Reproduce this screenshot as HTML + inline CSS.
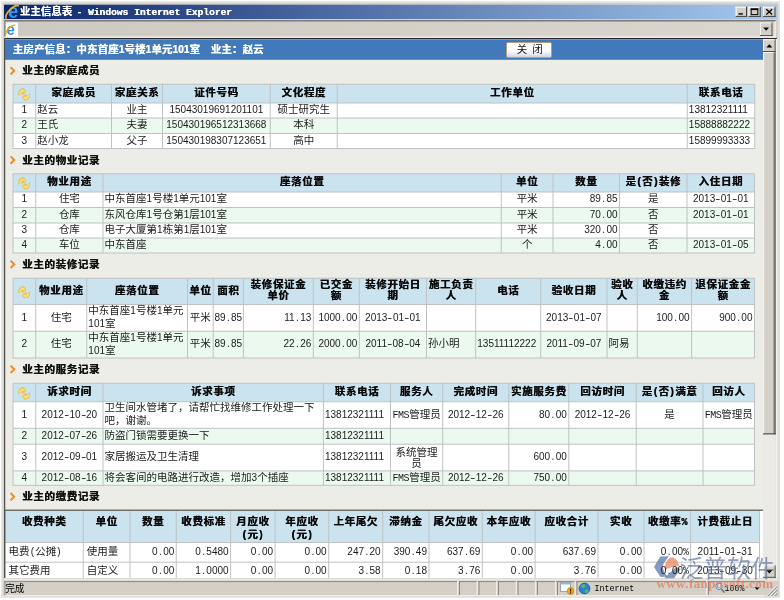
<!DOCTYPE html>
<html lang="zh-CN">
<head>
<meta charset="utf-8">
<title>业主信息表 - Windows Internet Explorer</title>
<style>
html,body{margin:0;padding:0;background:#fff;}
body{width:784px;height:600px;overflow:hidden;position:relative;font-family:"Liberation Sans","Noto Sans CJK SC",sans-serif;font-size:10.5px;color:#000;}
#bg{position:absolute;left:0;top:0;filter:blur(.45px);}
#tx{position:absolute;left:0;top:0;width:784px;height:600px;will-change:transform;filter:blur(.5px);}
i{font-style:normal;font-family:"Liberation Sans","Noto Sans CJK SC",sans-serif;font-size:10.0px;}
i u{display:inline-block;width:.556em;text-align:center;text-decoration:none;}
i u.d{transform:scaleX(1.5);}
i em{line-height:0;font-style:normal;font-family:"Liberation Mono",monospace;font-size:1em;letter-spacing:-.045em;}
.c{position:absolute;display:flex;align-items:center;justify-content:center;text-align:center;line-height:13px;overflow:visible;white-space:nowrap;color:#1a1a1a;}
.c.l{justify-content:flex-start;text-align:left;}
.c.r{justify-content:flex-end;text-align:right;}
.c.t{align-items:flex-start;padding-top:5.6px;box-sizing:border-box;}
.c.b{font-weight:bold;color:#0a0a0a;text-shadow:.4px 0 0 #111;line-height:11.5px;margin-top:-.3px;font-size:10.5px;letter-spacing:.65px;}
.c span{display:block;}
.c.w{white-space:normal;word-break:break-all;}
.c.n{line-height:11px;padding-top:1.4px;}
.c.b.t{line-height:12.4px;}
.ic{position:absolute;width:12px;height:12px;}
.ic svg{display:block;}
.st{text-shadow:.4px 0 0 #111;position:absolute;font-size:10.6px;letter-spacing:.55px;font-weight:bold;line-height:15px;white-space:nowrap;color:#111;}
.hb{text-shadow:.3px 0 0 #fff;position:absolute;font-size:10.5px;letter-spacing:.1px;font-weight:bold;color:#fff;line-height:15px;white-space:nowrap;}
.tt{text-shadow:.3px 0 0 #fff;position:absolute;left:19.8px;top:4.3px;color:#fff;font-weight:bold;line-height:15px;white-space:nowrap;font-size:10.5px;}
.tt .tm{font-family:"Liberation Mono",monospace;font-size:9.6px;font-weight:bold;letter-spacing:0;margin-left:1.3px;}
.sb{position:absolute;white-space:nowrap;line-height:14px;color:#000;font-size:10px;}
.sb b{font-weight:normal;font-family:"Liberation Mono",monospace;font-size:8.3px;}
.btn{position:absolute;left:506px;top:42px;width:46.4px;height:15.6px;word-spacing:2px;padding-left:1px;box-sizing:border-box;border:1px solid #b59d7e;border-radius:1.5px;background:linear-gradient(#ffffff 0%,#ffffff 55%,#d3d6de 100%);text-align:center;line-height:13px;font-size:10.5px;color:#111;}
.wm1{position:absolute;left:679.5px;top:555.2px;font-family:"Liberation Sans","Noto Sans CJK SC",sans-serif;font-size:23.8px;line-height:28px;color:rgba(84,104,146,.64);white-space:nowrap;letter-spacing:0;}
.wm2{position:absolute;left:656.5px;top:576.6px;font-family:"Liberation Serif",serif;font-weight:bold;font-size:13px;line-height:13px;color:rgba(222,126,94,.76);white-space:nowrap;letter-spacing:.42px;}
</style>
</head>
<body>
<svg id="bg" width="784" height="600" viewBox="0 0 784 600">
<defs>
<linearGradient id="tg" x1="0" x2="1" y1="0" y2="0"><stop offset="0" stop-color="#0a246a"/><stop offset="1" stop-color="#a6caf0"/></linearGradient>
<linearGradient id="tbg" x1="0" x2="1" y1="0" y2="0"><stop offset="0" stop-color="#cdcac3"/><stop offset=".5" stop-color="#d4d0c8"/><stop offset="1" stop-color="#d9d6cf"/></linearGradient>
</defs>
<!-- window frame -->
<rect x="1" y="1" width="779" height="596.8" fill="#d8d5ce"/>
<rect x="1.8" y="1.8" width="777" height="595" fill="none" stroke="#f4f3f0" stroke-width="1"/>
<rect x="3" y="3" width="775.5" height="593" fill="#d4d0c8"/>
<!-- title bar -->
<rect x="4" y="4.7" width="773.6" height="14.3" fill="url(#tg)"/>
<!-- toolbar -->
<rect x="4.3" y="20.8" width="771.4" height="17.4" fill="url(#tbg)"/>
<rect x="4.3" y="20.1" width="771.4" height="1.4" fill="#757471"/>
<rect x="774.6" y="21.5" width="1.2" height="15.5" fill="#f4f3f0"/>
<rect x="4.3" y="20.6" width="1" height="17" fill="#77756f"/>
<rect x="4.3" y="36.6" width="771.4" height="1.4" fill="#ffffff"/>
<rect x="4.3" y="37.9" width="772.5" height="1.5" fill="#26282e"/>
<rect x="5.00" y="39.40" width="758.00" height="538.60" fill="#edede8"/>
<rect x="5.00" y="39.40" width="758.00" height="20.40" fill="#4279ba"/>
<path d="M10.60 67.10 l3.6 3.7 l-3.6 3.7" fill="none" stroke="#f28a1c" stroke-width="2"/>
<rect x="13.00" y="84.25" width="741.75" height="18.75" fill="#cbe2ef"/>
<rect x="13.00" y="103.00" width="741.75" height="15.00" fill="#ffffff"/>
<rect x="13.00" y="118.00" width="741.75" height="15.50" fill="#ebf9ef"/>
<rect x="13.00" y="133.50" width="741.75" height="15.00" fill="#ffffff"/>
<rect x="13.00" y="83.75" width="741.75" height="1.00" fill="#bec2c4"/>
<rect x="13.00" y="102.50" width="741.75" height="1.00" fill="#bec2c4"/>
<rect x="13.00" y="117.50" width="741.75" height="1.00" fill="#bec2c4"/>
<rect x="13.00" y="133.00" width="741.75" height="1.00" fill="#bec2c4"/>
<rect x="13.00" y="148.00" width="741.75" height="1.00" fill="#bec2c4"/>
<rect x="12.50" y="84.25" width="1.00" height="64.25" fill="#bec2c4"/>
<rect x="35.25" y="84.25" width="1.00" height="64.25" fill="#bec2c4"/>
<rect x="111.00" y="84.25" width="1.00" height="64.25" fill="#bec2c4"/>
<rect x="162.00" y="84.25" width="1.00" height="64.25" fill="#bec2c4"/>
<rect x="269.75" y="84.25" width="1.00" height="64.25" fill="#bec2c4"/>
<rect x="336.75" y="84.25" width="1.00" height="64.25" fill="#bec2c4"/>
<rect x="686.75" y="84.25" width="1.00" height="64.25" fill="#bec2c4"/>
<rect x="754.25" y="84.25" width="1.00" height="64.25" fill="#bec2c4"/>
<path d="M10.60 156.35 l3.6 3.7 l-3.6 3.7" fill="none" stroke="#f28a1c" stroke-width="2"/>
<rect x="13.00" y="173.75" width="741.50" height="18.25" fill="#cbe2ef"/>
<rect x="13.00" y="192.00" width="741.50" height="15.50" fill="#ffffff"/>
<rect x="13.00" y="207.50" width="741.50" height="15.50" fill="#ebf9ef"/>
<rect x="13.00" y="223.00" width="741.50" height="15.00" fill="#ffffff"/>
<rect x="13.00" y="238.00" width="741.50" height="15.00" fill="#ebf9ef"/>
<rect x="13.00" y="173.25" width="741.50" height="1.00" fill="#bec2c4"/>
<rect x="13.00" y="191.50" width="741.50" height="1.00" fill="#bec2c4"/>
<rect x="13.00" y="207.00" width="741.50" height="1.00" fill="#bec2c4"/>
<rect x="13.00" y="222.50" width="741.50" height="1.00" fill="#bec2c4"/>
<rect x="13.00" y="237.50" width="741.50" height="1.00" fill="#bec2c4"/>
<rect x="13.00" y="252.50" width="741.50" height="1.00" fill="#bec2c4"/>
<rect x="12.50" y="173.75" width="1.00" height="79.25" fill="#bec2c4"/>
<rect x="35.25" y="173.75" width="1.00" height="79.25" fill="#bec2c4"/>
<rect x="102.50" y="173.75" width="1.00" height="79.25" fill="#bec2c4"/>
<rect x="500.75" y="173.75" width="1.00" height="79.25" fill="#bec2c4"/>
<rect x="552.50" y="173.75" width="1.00" height="79.25" fill="#bec2c4"/>
<rect x="619.00" y="173.75" width="1.00" height="79.25" fill="#bec2c4"/>
<rect x="686.50" y="173.75" width="1.00" height="79.25" fill="#bec2c4"/>
<rect x="754.00" y="173.75" width="1.00" height="79.25" fill="#bec2c4"/>
<path d="M10.60 260.60 l3.6 3.7 l-3.6 3.7" fill="none" stroke="#f28a1c" stroke-width="2"/>
<rect x="13.00" y="278.25" width="741.50" height="26.25" fill="#cbe2ef"/>
<rect x="13.00" y="304.50" width="741.50" height="26.75" fill="#ffffff"/>
<rect x="13.00" y="331.25" width="741.50" height="26.75" fill="#ebf9ef"/>
<rect x="13.00" y="277.75" width="741.50" height="1.00" fill="#bec2c4"/>
<rect x="13.00" y="304.00" width="741.50" height="1.00" fill="#bec2c4"/>
<rect x="13.00" y="330.75" width="741.50" height="1.00" fill="#bec2c4"/>
<rect x="13.00" y="357.50" width="741.50" height="1.00" fill="#bec2c4"/>
<rect x="12.50" y="278.25" width="1.00" height="79.75" fill="#bec2c4"/>
<rect x="35.25" y="278.25" width="1.00" height="79.75" fill="#bec2c4"/>
<rect x="86.25" y="278.25" width="1.00" height="79.75" fill="#bec2c4"/>
<rect x="187.00" y="278.25" width="1.00" height="79.75" fill="#bec2c4"/>
<rect x="212.70" y="278.25" width="1.00" height="79.75" fill="#bec2c4"/>
<rect x="242.90" y="278.25" width="1.00" height="79.75" fill="#bec2c4"/>
<rect x="312.80" y="278.25" width="1.00" height="79.75" fill="#bec2c4"/>
<rect x="358.80" y="278.25" width="1.00" height="79.75" fill="#bec2c4"/>
<rect x="426.00" y="278.25" width="1.00" height="79.75" fill="#bec2c4"/>
<rect x="475.20" y="278.25" width="1.00" height="79.75" fill="#bec2c4"/>
<rect x="540.20" y="278.25" width="1.00" height="79.75" fill="#bec2c4"/>
<rect x="606.50" y="278.25" width="1.00" height="79.75" fill="#bec2c4"/>
<rect x="636.80" y="278.25" width="1.00" height="79.75" fill="#bec2c4"/>
<rect x="691.10" y="278.25" width="1.00" height="79.75" fill="#bec2c4"/>
<rect x="754.00" y="278.25" width="1.00" height="79.75" fill="#bec2c4"/>
<path d="M10.60 365.60 l3.6 3.7 l-3.6 3.7" fill="none" stroke="#f28a1c" stroke-width="2"/>
<rect x="13.00" y="383.25" width="741.50" height="18.50" fill="#cbe2ef"/>
<rect x="13.00" y="401.75" width="741.50" height="26.50" fill="#ffffff"/>
<rect x="13.00" y="428.25" width="741.50" height="15.95" fill="#ebf9ef"/>
<rect x="13.00" y="444.20" width="741.50" height="26.70" fill="#ffffff"/>
<rect x="13.00" y="470.90" width="741.50" height="14.40" fill="#ebf9ef"/>
<rect x="13.00" y="382.75" width="741.50" height="1.00" fill="#bec2c4"/>
<rect x="13.00" y="401.25" width="741.50" height="1.00" fill="#bec2c4"/>
<rect x="13.00" y="427.75" width="741.50" height="1.00" fill="#bec2c4"/>
<rect x="13.00" y="443.70" width="741.50" height="1.00" fill="#bec2c4"/>
<rect x="13.00" y="470.40" width="741.50" height="1.00" fill="#bec2c4"/>
<rect x="13.00" y="484.80" width="741.50" height="1.00" fill="#bec2c4"/>
<rect x="12.50" y="383.25" width="1.00" height="102.05" fill="#bec2c4"/>
<rect x="35.25" y="383.25" width="1.00" height="102.05" fill="#bec2c4"/>
<rect x="102.50" y="383.25" width="1.00" height="102.05" fill="#bec2c4"/>
<rect x="322.90" y="383.25" width="1.00" height="102.05" fill="#bec2c4"/>
<rect x="390.00" y="383.25" width="1.00" height="102.05" fill="#bec2c4"/>
<rect x="442.20" y="383.25" width="1.00" height="102.05" fill="#bec2c4"/>
<rect x="508.30" y="383.25" width="1.00" height="102.05" fill="#bec2c4"/>
<rect x="568.30" y="383.25" width="1.00" height="102.05" fill="#bec2c4"/>
<rect x="635.70" y="383.25" width="1.00" height="102.05" fill="#bec2c4"/>
<rect x="702.50" y="383.25" width="1.00" height="102.05" fill="#bec2c4"/>
<rect x="754.00" y="383.25" width="1.00" height="102.05" fill="#bec2c4"/>
<path d="M10.60 493.00 l3.6 3.7 l-3.6 3.7" fill="none" stroke="#f28a1c" stroke-width="2"/>
<rect x="5.00" y="510.70" width="758.00" height="67.40" fill="#ffffff"/>
<rect x="5.00" y="510.70" width="754.50" height="31.80" fill="#cbe2ef"/>
<rect x="5.00" y="542.50" width="754.50" height="19.70" fill="#ffffff"/>
<rect x="5.00" y="562.20" width="754.50" height="18.40" fill="#ffffff"/>
<rect x="5.00" y="542.00" width="754.50" height="1.00" fill="#bec2c4"/>
<rect x="5.00" y="561.70" width="754.50" height="1.00" fill="#bec2c4"/>
<rect x="5.00" y="580.10" width="754.50" height="1.00" fill="#bec2c4"/>
<rect x="82.75" y="510.70" width="1.00" height="69.90" fill="#bec2c4"/>
<rect x="129.50" y="510.70" width="1.00" height="69.90" fill="#bec2c4"/>
<rect x="175.75" y="510.70" width="1.00" height="69.90" fill="#bec2c4"/>
<rect x="230.10" y="510.70" width="1.00" height="69.90" fill="#bec2c4"/>
<rect x="274.60" y="510.70" width="1.00" height="69.90" fill="#bec2c4"/>
<rect x="328.20" y="510.70" width="1.00" height="69.90" fill="#bec2c4"/>
<rect x="382.20" y="510.70" width="1.00" height="69.90" fill="#bec2c4"/>
<rect x="428.50" y="510.70" width="1.00" height="69.90" fill="#bec2c4"/>
<rect x="481.80" y="510.70" width="1.00" height="69.90" fill="#bec2c4"/>
<rect x="534.60" y="510.70" width="1.00" height="69.90" fill="#bec2c4"/>
<rect x="597.50" y="510.70" width="1.00" height="69.90" fill="#bec2c4"/>
<rect x="643.50" y="510.70" width="1.00" height="69.90" fill="#bec2c4"/>
<rect x="690.10" y="510.70" width="1.00" height="69.90" fill="#bec2c4"/>
<rect x="759.00" y="510.70" width="1.00" height="69.90" fill="#bec2c4"/>
<rect x="4.50" y="509.60" width="758.50" height="1.20" fill="#55534e"/>
<rect x="4.30" y="509.60" width="1.00" height="69.40" fill="#6a6862"/>
<rect x="4" y="38" width="1.25" height="541.5" fill="#55534f"/>
<!-- scrollbar -->
<rect x="763" y="39" width="12.8" height="539" fill="#eceae6"/>
<rect x="776" y="39" width="1.6" height="539" fill="#f3f2ef"/>
<g id="sbup">
<rect x="763" y="39.3" width="12.6" height="12.7" fill="#d4d0c8"/>
<rect x="763" y="39.3" width="12.6" height="1" fill="#f6f5f2"/><rect x="763" y="39.3" width="1" height="12.7" fill="#f6f5f2"/>
<rect x="763" y="51" width="12.6" height="1" fill="#55534f"/><rect x="774.6" y="39.3" width="1" height="12.7" fill="#55534f"/>
<path d="M766.3 47.6 l3 -3.4 l3 3.4z" fill="#000"/>
</g>
<g id="thumb">
<rect x="763" y="52" width="12.6" height="382.4" fill="#d4d0c8"/>
<rect x="763" y="52" width="1.2" height="382.4" fill="#f6f5f2"/><rect x="763" y="52" width="12.6" height="1" fill="#f6f5f2"/>
<rect x="773.4" y="52.5" width="1.2" height="381.5" fill="#8a8882"/>
<rect x="774.5" y="52" width="1.1" height="382.4" fill="#4a4946"/><rect x="763" y="433.3" width="12.6" height="1.1" fill="#4a4946"/>
</g>
<g id="sbdn">
<rect x="763" y="565.4" width="12.6" height="12.4" fill="#d4d0c8"/>
<rect x="763" y="565.4" width="12.6" height="1" fill="#f6f5f2"/><rect x="763" y="565.4" width="1" height="12.4" fill="#f6f5f2"/>
<rect x="763" y="576.8" width="12.6" height="1" fill="#55534f"/><rect x="774.6" y="565.4" width="1" height="12.4" fill="#55534f"/>
<path d="M766.3 570 l3 3.4 l3 -3.4z" fill="#000"/>
</g>
<!-- toolbar dropdown button -->
<rect x="760" y="22.4" width="12.5" height="13.6" fill="#d4d0c8"/>
<rect x="760" y="22.4" width="12.5" height="1" fill="#f6f5f2"/><rect x="760" y="22.4" width="1" height="13.6" fill="#f6f5f2"/>
<rect x="760" y="35" width="12.5" height="1" fill="#55534f"/><rect x="771.5" y="22.4" width="1" height="13.6" fill="#55534f"/>
<path d="M763.2 27.6 l2.9 3.2 l2.9 -3.2z" fill="#000"/>
<!-- title buttons -->
<g id="tb">
<rect x="735.6" y="6.7" width="11.4" height="10.2" fill="#d4d0c8"/><rect x="735.6" y="6.7" width="11.4" height="1" fill="#fff"/><rect x="735.6" y="6.7" width="1" height="10.2" fill="#fff"/><rect x="735.6" y="15.9" width="11.4" height="1" fill="#404040"/><rect x="746" y="6.7" width="1" height="10.2" fill="#404040"/>
<rect x="738.5" y="13.2" width="4.4" height="1.4" fill="#000"/>
<rect x="748.4" y="6.7" width="12.3" height="10.2" fill="#d4d0c8"/><rect x="748.4" y="6.7" width="12.3" height="1" fill="#fff"/><rect x="748.4" y="6.7" width="1" height="10.2" fill="#fff"/><rect x="748.4" y="15.9" width="12.3" height="1" fill="#404040"/><rect x="759.7" y="6.7" width="1" height="10.2" fill="#404040"/>
<rect x="751.2" y="9" width="6.6" height="5.6" fill="none" stroke="#000" stroke-width="1"/><rect x="750.7" y="8.5" width="7.6" height="1.6" fill="#000"/>
<rect x="763" y="6.7" width="12.5" height="10.2" fill="#d4d0c8"/><rect x="763" y="6.7" width="12.5" height="1" fill="#fff"/><rect x="763" y="6.7" width="1" height="10.2" fill="#fff"/><rect x="763" y="15.9" width="12.5" height="1" fill="#404040"/><rect x="774.5" y="6.7" width="1" height="10.2" fill="#404040"/>
<path d="M766.3 9.2 l5.8 5.4 M772.1 9.2 l-5.8 5.4" stroke="#000" stroke-width="1.35" fill="none"/>
</g>
<!-- status bar -->
<rect x="4" y="578" width="775" height="18.6" fill="#d4d0c8"/>
<rect x="4" y="578" width="773.6" height="1.3" fill="#dedbd5"/>
<rect x="4" y="579.3" width="775" height="1.1" fill="#f3f2ef"/>
<rect x="4.5" y="581.1" width="453" height="1" fill="#8a8882"/><rect x="4.5" y="581.1" width="1" height="14.6" fill="#8a8882"/><rect x="4.5" y="595.2" width="453" height="1" fill="#f6f5f2"/>
<g fill="#8a8882">
<rect x="459" y="581" width="1" height="14.5"/><rect x="478.5" y="581" width="1" height="14.5"/><rect x="498" y="581" width="1" height="14.5"/><rect x="517.5" y="581" width="1" height="14.5"/><rect x="537" y="581" width="1" height="14.5"/><rect x="557" y="581" width="1" height="14.5"/><rect x="576.5" y="581" width="1" height="14.5"/><rect x="708" y="581" width="1" height="14.5"/>
<rect x="459" y="581.1" width="306" height="1"/>
</g>
<g fill="#f6f5f2">
<rect x="457.2" y="581" width="1" height="14.5"/><rect x="476.7" y="581" width="1" height="14.5"/><rect x="496.2" y="581" width="1" height="14.5"/><rect x="515.7" y="581" width="1" height="14.5"/><rect x="535.2" y="581" width="1" height="14.5"/><rect x="555.2" y="581" width="1" height="14.5"/><rect x="574.7" y="581" width="1" height="14.5"/><rect x="706.2" y="581" width="1" height="14.5"/>
<rect x="459" y="595.2" width="306" height="1"/>
</g>
<!-- status icons -->
<rect x="560.5" y="582.5" width="10" height="9" fill="#fff" stroke="#8a8f98" stroke-width=".8"/><rect x="560.5" y="582.5" width="10" height="2" fill="#9db3d8"/>
<circle cx="570.5" cy="591" r="3.4" fill="#f0a818" stroke="#b87808" stroke-width=".6"/><rect x="570" y="588.7" width="1.1" height="3" fill="#222"/><rect x="570" y="592.3" width="1.1" height="1.1" fill="#222"/>
<circle cx="584.5" cy="588.5" r="5.4" fill="#2f7fd2" stroke="#1c4f96" stroke-width=".8"/>
<path d="M581 585.5 q2.5 -2 4.5 -.5 q.5 2 -1.5 3 q-2.5 .5 -3 -2.5z M585 590 q2.5 -1 3.5 .5 q-.5 2.5 -3 2.8 q-1.5 -1.5 -.5 -3.3z" fill="#4fc24a"/>
<!-- zoom icon -->
<circle cx="719" cy="586.3" r="3.2" fill="#cfe6fa" stroke="#5a86c0" stroke-width="1"/><path d="M721.3 589 l3.2 3.6" stroke="#8a6a48" stroke-width="1.5"/>
<path d="M754.5 587.2 l2.6 2.8 l2.6 -2.8z" fill="#000"/>
<!-- resize grip -->
<g stroke="#8a8882" stroke-width="1.1"><path d="M768 595.6 l9.4 -9.4 M771.5 595.6 l5.9 -5.9 M775 595.6 l2.4 -2.4"/></g>
<g stroke="#fff" stroke-width=".9"><path d="M767 595.6 l10.4 -10.4 M770.5 595.6 l6.9 -6.9 M774 595.6 l3.4 -3.4"/></g>
<!-- IE icons -->
<g id="ie1">
<text transform="translate(7.9 18) scale(.88 1)" font-family="Liberation Sans, sans-serif" font-weight="bold" font-size="21" fill="#2c9cf2">e</text>
<path d="M6 18 A8.8 3.8 -45 0 1 18.2 5.8" fill="none" stroke="#eeb422" stroke-width="1.7" stroke-linecap="round"/>
</g>
<g id="ie2">
<rect x="6" y="22.4" width="12" height="14.4" fill="#fdfdfc"/>
<text transform="translate(6.4 34.7) scale(.9 1)" font-family="Liberation Sans, sans-serif" font-weight="bold" font-size="16.5" fill="#2a8fe6">e</text>
<path d="M5.8 34.6 A7 3 -45 0 1 14.6 25" fill="none" stroke="#e6ac22" stroke-width="1.4" stroke-linecap="round"/>
</g>
<!-- watermark logo -->
<g>
<path d="M660.2 556.5 L669 556.3 L663.8 563 L662.6 567 L664.6 573 L668 577 L660.2 576.8 L654 567Z" fill="rgba(92,118,168,.74)"/>
<path d="M664.8 570.5 C664.5 562 668 557.5 672.5 557.3 C676.5 559 679 562.5 679 566 C674 566 668 568 664.8 570.5Z" fill="rgba(232,140,100,.78)"/>
<path d="M664.5 578.3 L674 578.3 L680.8 569 L676 567 C672 571 668 574.5 664.5 578.3Z" fill="rgba(92,118,168,.74)"/>
</g>
</svg>
<div id="tx">
<div class="tt">业主信息表 <span class="tm">- Windows Internet Explorer</span></div>
<div class="btn">关 闭</div>
<div class="hb" style="left:12.7px;top:42px">主房产信息：中东首座<i>1</i>号楼<i>1</i>单元<i>101</i>室　业主：赵云</div>
<div class="st" style="left:22px;top:63.40px">业主的家庭成员</div>
<div class="ic" style="left:17.77px;top:87.92px"><svg class="ri" width="12.4" height="12.8" viewBox="0 0 12.4 12.8"><g fill="#f0c846" stroke="#e6b83c" stroke-width=".4" stroke-linejoin="round"><path d="M0.2 6.8 L0.4 4.0 L2.2 1.6 L4.6 0.2 L6.2 0.8 L8.2 3.6 L7.6 4.4 L5.4 6.0 L4.2 6.4 L3.8 4.8 L2.2 5.6 L0.8 7.2Z"/><path d="M12.2 6.0 L12.0 8.8 L10.2 11.2 L7.8 12.6 L6.2 12.0 L4.2 9.2 L4.8 8.4 L7.0 6.8 L8.2 6.4 L8.6 8.0 L10.2 7.2 L11.6 5.6Z"/></g><path d="M1.6 5 L4.4 2.2 L6.4 3.4 M10.8 7.8 L8 10.6 L6 9.4" fill="none" stroke="#fbe694" stroke-width="1.3" stroke-linecap="round"/></svg></div>
<div class="c b" style="left:35.75px;top:83.45px;width:75.75px;height:18.75px;"><span>家庭成员</span></div>
<div class="c b" style="left:111.50px;top:83.45px;width:51.00px;height:18.75px;"><span>家庭关系</span></div>
<div class="c b" style="left:162.50px;top:83.45px;width:107.75px;height:18.75px;"><span>证件号码</span></div>
<div class="c b" style="left:270.25px;top:83.45px;width:67.00px;height:18.75px;"><span>文化程度</span></div>
<div class="c b" style="left:337.25px;top:83.45px;width:350.00px;height:18.75px;"><span>工作单位</span></div>
<div class="c b" style="left:687.25px;top:83.45px;width:67.50px;height:18.75px;"><span>联系电话</span></div>
<div class="c" style="left:15.00px;top:102.20px;width:18.75px;height:15.00px;"><span><i>1</i></span></div>
<div class="c l" style="left:37.35px;top:102.20px;width:72.55px;height:15.00px;"><span>赵云</span></div>
<div class="c" style="left:113.50px;top:102.20px;width:47.00px;height:15.00px;"><span>业主</span></div>
<div class="c" style="left:164.50px;top:102.20px;width:103.75px;height:15.00px;"><span><i>15043019691201101</i></span></div>
<div class="c" style="left:272.25px;top:102.20px;width:63.00px;height:15.00px;"><span>硕士研究生</span></div>
<div class="c l" style="left:688.85px;top:102.20px;width:64.30px;height:15.00px;"><span><i>13812321111</i></span></div>
<div class="c" style="left:15.00px;top:117.20px;width:18.75px;height:15.50px;"><span><i>2</i></span></div>
<div class="c l" style="left:37.35px;top:117.20px;width:72.55px;height:15.50px;"><span>王氏</span></div>
<div class="c" style="left:113.50px;top:117.20px;width:47.00px;height:15.50px;"><span>夫妻</span></div>
<div class="c" style="left:164.50px;top:117.20px;width:103.75px;height:15.50px;"><span><i>150430196512313668</i></span></div>
<div class="c" style="left:272.25px;top:117.20px;width:63.00px;height:15.50px;"><span>本科</span></div>
<div class="c l" style="left:688.85px;top:117.20px;width:64.30px;height:15.50px;"><span><i>15888882222</i></span></div>
<div class="c" style="left:15.00px;top:132.70px;width:18.75px;height:15.00px;"><span><i>3</i></span></div>
<div class="c l" style="left:37.35px;top:132.70px;width:72.55px;height:15.00px;"><span>赵小龙</span></div>
<div class="c" style="left:113.50px;top:132.70px;width:47.00px;height:15.00px;"><span>父子</span></div>
<div class="c" style="left:164.50px;top:132.70px;width:103.75px;height:15.00px;"><span><i>150430198307123651</i></span></div>
<div class="c" style="left:272.25px;top:132.70px;width:63.00px;height:15.00px;"><span>高中</span></div>
<div class="c l" style="left:688.85px;top:132.70px;width:64.30px;height:15.00px;"><span><i>15899993333</i></span></div>
<div class="st" style="left:22px;top:152.65px">业主的物业记录</div>
<div class="ic" style="left:17.77px;top:177.18px"><svg class="ri" width="12.4" height="12.8" viewBox="0 0 12.4 12.8"><g fill="#f0c846" stroke="#e6b83c" stroke-width=".4" stroke-linejoin="round"><path d="M0.2 6.8 L0.4 4.0 L2.2 1.6 L4.6 0.2 L6.2 0.8 L8.2 3.6 L7.6 4.4 L5.4 6.0 L4.2 6.4 L3.8 4.8 L2.2 5.6 L0.8 7.2Z"/><path d="M12.2 6.0 L12.0 8.8 L10.2 11.2 L7.8 12.6 L6.2 12.0 L4.2 9.2 L4.8 8.4 L7.0 6.8 L8.2 6.4 L8.6 8.0 L10.2 7.2 L11.6 5.6Z"/></g><path d="M1.6 5 L4.4 2.2 L6.4 3.4 M10.8 7.8 L8 10.6 L6 9.4" fill="none" stroke="#fbe694" stroke-width="1.3" stroke-linecap="round"/></svg></div>
<div class="c b" style="left:35.75px;top:172.95px;width:67.25px;height:18.25px;"><span>物业用途</span></div>
<div class="c b" style="left:103.00px;top:172.95px;width:398.25px;height:18.25px;"><span>座落位置</span></div>
<div class="c b" style="left:501.25px;top:172.95px;width:51.75px;height:18.25px;"><span>单位</span></div>
<div class="c b" style="left:553.00px;top:172.95px;width:66.50px;height:18.25px;"><span>数量</span></div>
<div class="c b" style="left:619.50px;top:172.95px;width:67.50px;height:18.25px;"><span>是<i><u>(</u></i>否<i><u>)</u></i>装修</span></div>
<div class="c b" style="left:687.00px;top:172.95px;width:67.50px;height:18.25px;"><span>入住日期</span></div>
<div class="c" style="left:15.00px;top:191.20px;width:18.75px;height:15.50px;"><span><i>1</i></span></div>
<div class="c" style="left:37.75px;top:191.20px;width:63.25px;height:15.50px;"><span>住宅</span></div>
<div class="c l" style="left:104.60px;top:191.20px;width:395.05px;height:15.50px;"><span>中东首座<i>1</i>号楼<i>1</i>单元<i>101</i>室</span></div>
<div class="c" style="left:503.25px;top:191.20px;width:47.75px;height:15.50px;"><span>平米</span></div>
<div class="c r" style="left:555.00px;top:191.20px;width:62.50px;height:15.50px;"><span><i>89<u>.</u>85</i></span></div>
<div class="c" style="left:621.50px;top:191.20px;width:63.50px;height:15.50px;"><span>是</span></div>
<div class="c" style="left:689.00px;top:191.20px;width:63.50px;height:15.50px;"><span><i>2013<u class="d">-</u>01<u class="d">-</u>01</i></span></div>
<div class="c" style="left:15.00px;top:206.70px;width:18.75px;height:15.50px;"><span><i>2</i></span></div>
<div class="c" style="left:37.75px;top:206.70px;width:63.25px;height:15.50px;"><span>仓库</span></div>
<div class="c l" style="left:104.60px;top:206.70px;width:395.05px;height:15.50px;"><span>东风仓库<i>1</i>号仓第<i>1</i>层<i>101</i>室</span></div>
<div class="c" style="left:503.25px;top:206.70px;width:47.75px;height:15.50px;"><span>平米</span></div>
<div class="c r" style="left:555.00px;top:206.70px;width:62.50px;height:15.50px;"><span><i>70<u>.</u>00</i></span></div>
<div class="c" style="left:621.50px;top:206.70px;width:63.50px;height:15.50px;"><span>否</span></div>
<div class="c" style="left:689.00px;top:206.70px;width:63.50px;height:15.50px;"><span><i>2013<u class="d">-</u>01<u class="d">-</u>01</i></span></div>
<div class="c" style="left:15.00px;top:222.20px;width:18.75px;height:15.00px;"><span><i>3</i></span></div>
<div class="c" style="left:37.75px;top:222.20px;width:63.25px;height:15.00px;"><span>仓库</span></div>
<div class="c l" style="left:104.60px;top:222.20px;width:395.05px;height:15.00px;"><span>电子大厦第<i>1</i>栋第<i>1</i>层<i>101</i>室</span></div>
<div class="c" style="left:503.25px;top:222.20px;width:47.75px;height:15.00px;"><span>平米</span></div>
<div class="c r" style="left:555.00px;top:222.20px;width:62.50px;height:15.00px;"><span><i>320<u>.</u>00</i></span></div>
<div class="c" style="left:621.50px;top:222.20px;width:63.50px;height:15.00px;"><span>否</span></div>
<div class="c" style="left:15.00px;top:237.20px;width:18.75px;height:15.00px;"><span><i>4</i></span></div>
<div class="c" style="left:37.75px;top:237.20px;width:63.25px;height:15.00px;"><span>车位</span></div>
<div class="c l" style="left:104.60px;top:237.20px;width:395.05px;height:15.00px;"><span>中东首座</span></div>
<div class="c" style="left:503.25px;top:237.20px;width:47.75px;height:15.00px;"><span>个</span></div>
<div class="c r" style="left:555.00px;top:237.20px;width:62.50px;height:15.00px;"><span><i>4<u>.</u>00</i></span></div>
<div class="c" style="left:621.50px;top:237.20px;width:63.50px;height:15.00px;"><span>否</span></div>
<div class="c" style="left:689.00px;top:237.20px;width:63.50px;height:15.00px;"><span><i>2013<u class="d">-</u>01<u class="d">-</u>05</i></span></div>
<div class="st" style="left:22px;top:256.90px">业主的装修记录</div>
<div class="ic" style="left:17.77px;top:285.68px"><svg class="ri" width="12.4" height="12.8" viewBox="0 0 12.4 12.8"><g fill="#f0c846" stroke="#e6b83c" stroke-width=".4" stroke-linejoin="round"><path d="M0.2 6.8 L0.4 4.0 L2.2 1.6 L4.6 0.2 L6.2 0.8 L8.2 3.6 L7.6 4.4 L5.4 6.0 L4.2 6.4 L3.8 4.8 L2.2 5.6 L0.8 7.2Z"/><path d="M12.2 6.0 L12.0 8.8 L10.2 11.2 L7.8 12.6 L6.2 12.0 L4.2 9.2 L4.8 8.4 L7.0 6.8 L8.2 6.4 L8.6 8.0 L10.2 7.2 L11.6 5.6Z"/></g><path d="M1.6 5 L4.4 2.2 L6.4 3.4 M10.8 7.8 L8 10.6 L6 9.4" fill="none" stroke="#fbe694" stroke-width="1.3" stroke-linecap="round"/></svg></div>
<div class="c b" style="left:35.75px;top:277.45px;width:51.00px;height:26.25px;"><span>物业用途</span></div>
<div class="c b" style="left:86.75px;top:277.45px;width:100.75px;height:26.25px;"><span>座落位置</span></div>
<div class="c b" style="left:187.50px;top:277.45px;width:25.70px;height:26.25px;"><span>单位</span></div>
<div class="c b" style="left:213.20px;top:277.45px;width:30.20px;height:26.25px;"><span>面积</span></div>
<div class="c b" style="left:243.40px;top:277.45px;width:69.90px;height:26.25px;"><span>装修保证金<br>单价</span></div>
<div class="c b" style="left:313.30px;top:277.45px;width:46.00px;height:26.25px;"><span>已交金<br>额</span></div>
<div class="c b" style="left:359.30px;top:277.45px;width:67.20px;height:26.25px;"><span>装修开始日<br>期</span></div>
<div class="c b" style="left:426.50px;top:277.45px;width:49.20px;height:26.25px;"><span>施工负责<br>人</span></div>
<div class="c b" style="left:475.70px;top:277.45px;width:65.00px;height:26.25px;"><span>电话</span></div>
<div class="c b" style="left:540.70px;top:277.45px;width:66.30px;height:26.25px;"><span>验收日期</span></div>
<div class="c b" style="left:607.00px;top:277.45px;width:30.30px;height:26.25px;"><span>验收<br>人</span></div>
<div class="c b" style="left:637.30px;top:277.45px;width:54.30px;height:26.25px;"><span>收缴违约<br>金</span></div>
<div class="c b" style="left:691.60px;top:277.45px;width:62.90px;height:26.25px;"><span>退保证金金<br>额</span></div>
<div class="c" style="left:15.00px;top:303.70px;width:18.75px;height:26.75px;"><span><i>1</i></span></div>
<div class="c" style="left:37.75px;top:303.70px;width:47.00px;height:26.75px;"><span>住宅</span></div>
<div class="c l w" style="left:88.35px;top:303.70px;width:97.55px;height:26.75px;"><span>中东首座<i>1</i>号楼<i>1</i>单元<i>101</i>室</span></div>
<div class="c" style="left:189.50px;top:303.70px;width:21.70px;height:26.75px;"><span>平米</span></div>
<div class="c" style="left:215.20px;top:303.70px;width:26.20px;height:26.75px;"><span><i>89<u>.</u>85</i></span></div>
<div class="c r" style="left:245.40px;top:303.70px;width:65.90px;height:26.75px;"><span><i>11<u>.</u>13</i></span></div>
<div class="c r" style="left:315.30px;top:303.70px;width:42.00px;height:26.75px;"><span><i>1000<u>.</u>00</i></span></div>
<div class="c" style="left:361.30px;top:303.70px;width:63.20px;height:26.75px;"><span><i>2013<u class="d">-</u>01<u class="d">-</u>01</i></span></div>
<div class="c" style="left:542.70px;top:303.70px;width:62.30px;height:26.75px;"><span><i>2013<u class="d">-</u>01<u class="d">-</u>07</i></span></div>
<div class="c r" style="left:639.30px;top:303.70px;width:50.30px;height:26.75px;"><span><i>100<u>.</u>00</i></span></div>
<div class="c r" style="left:693.60px;top:303.70px;width:58.90px;height:26.75px;"><span><i>900<u>.</u>00</i></span></div>
<div class="c" style="left:15.00px;top:330.45px;width:18.75px;height:26.75px;"><span><i>2</i></span></div>
<div class="c" style="left:37.75px;top:330.45px;width:47.00px;height:26.75px;"><span>住宅</span></div>
<div class="c l w" style="left:88.35px;top:330.45px;width:97.55px;height:26.75px;"><span>中东首座<i>1</i>号楼<i>1</i>单元<i>101</i>室</span></div>
<div class="c" style="left:189.50px;top:330.45px;width:21.70px;height:26.75px;"><span>平米</span></div>
<div class="c" style="left:215.20px;top:330.45px;width:26.20px;height:26.75px;"><span><i>89<u>.</u>85</i></span></div>
<div class="c r" style="left:245.40px;top:330.45px;width:65.90px;height:26.75px;"><span><i>22<u>.</u>26</i></span></div>
<div class="c r" style="left:315.30px;top:330.45px;width:42.00px;height:26.75px;"><span><i>2000<u>.</u>00</i></span></div>
<div class="c" style="left:361.30px;top:330.45px;width:63.20px;height:26.75px;"><span><i>2011<u class="d">-</u>08<u class="d">-</u>04</i></span></div>
<div class="c l" style="left:428.10px;top:330.45px;width:46.00px;height:26.75px;"><span>孙小明</span></div>
<div class="c l" style="left:477.30px;top:330.45px;width:61.80px;height:26.75px;"><span><i>13511112222</i></span></div>
<div class="c" style="left:542.70px;top:330.45px;width:62.30px;height:26.75px;"><span><i>2011<u class="d">-</u>09<u class="d">-</u>07</i></span></div>
<div class="c l" style="left:608.60px;top:330.45px;width:27.10px;height:26.75px;"><span>阿易</span></div>
<div class="st" style="left:22px;top:361.90px">业主的服务记录</div>
<div class="ic" style="left:17.77px;top:386.80px"><svg class="ri" width="12.4" height="12.8" viewBox="0 0 12.4 12.8"><g fill="#f0c846" stroke="#e6b83c" stroke-width=".4" stroke-linejoin="round"><path d="M0.2 6.8 L0.4 4.0 L2.2 1.6 L4.6 0.2 L6.2 0.8 L8.2 3.6 L7.6 4.4 L5.4 6.0 L4.2 6.4 L3.8 4.8 L2.2 5.6 L0.8 7.2Z"/><path d="M12.2 6.0 L12.0 8.8 L10.2 11.2 L7.8 12.6 L6.2 12.0 L4.2 9.2 L4.8 8.4 L7.0 6.8 L8.2 6.4 L8.6 8.0 L10.2 7.2 L11.6 5.6Z"/></g><path d="M1.6 5 L4.4 2.2 L6.4 3.4 M10.8 7.8 L8 10.6 L6 9.4" fill="none" stroke="#fbe694" stroke-width="1.3" stroke-linecap="round"/></svg></div>
<div class="c b" style="left:35.75px;top:382.45px;width:67.25px;height:18.50px;"><span>诉求时间</span></div>
<div class="c b" style="left:103.00px;top:382.45px;width:220.40px;height:18.50px;"><span>诉求事项</span></div>
<div class="c b" style="left:323.40px;top:382.45px;width:67.10px;height:18.50px;"><span>联系电话</span></div>
<div class="c b" style="left:390.50px;top:382.45px;width:52.20px;height:18.50px;"><span>服务人</span></div>
<div class="c b" style="left:442.70px;top:382.45px;width:66.10px;height:18.50px;"><span>完成时间</span></div>
<div class="c b" style="left:508.80px;top:382.45px;width:60.00px;height:18.50px;"><span>实施服务费</span></div>
<div class="c b" style="left:568.80px;top:382.45px;width:67.40px;height:18.50px;"><span>回访时间</span></div>
<div class="c b" style="left:636.20px;top:382.45px;width:66.80px;height:18.50px;"><span>是<i><u>(</u></i>否<i><u>)</u></i>满意</span></div>
<div class="c b" style="left:703.00px;top:382.45px;width:51.50px;height:18.50px;"><span>回访人</span></div>
<div class="c" style="left:15.00px;top:400.95px;width:18.75px;height:26.50px;"><span><i>1</i></span></div>
<div class="c" style="left:37.75px;top:400.95px;width:63.25px;height:26.50px;"><span><i>2012<u class="d">-</u>10<u class="d">-</u>20</i></span></div>
<div class="c l w" style="left:104.60px;top:400.95px;width:217.20px;height:26.50px;"><span>卫生间水管堵了，请帮忙找维修工作处理一下吧，谢谢。</span></div>
<div class="c l" style="left:325.00px;top:400.95px;width:63.90px;height:26.50px;"><span><i>13812321111</i></span></div>
<div class="c" style="left:392.50px;top:400.95px;width:48.20px;height:26.50px;"><span><i><em>FMS</em></i>管理员</span></div>
<div class="c" style="left:444.70px;top:400.95px;width:62.10px;height:26.50px;"><span><i>2012<u class="d">-</u>12<u class="d">-</u>26</i></span></div>
<div class="c r" style="left:510.80px;top:400.95px;width:56.00px;height:26.50px;"><span><i>80<u>.</u>00</i></span></div>
<div class="c" style="left:570.80px;top:400.95px;width:63.40px;height:26.50px;"><span><i>2012<u class="d">-</u>12<u class="d">-</u>26</i></span></div>
<div class="c" style="left:638.20px;top:400.95px;width:62.80px;height:26.50px;"><span>是</span></div>
<div class="c" style="left:705.00px;top:400.95px;width:47.50px;height:26.50px;"><span><i><em>FMS</em></i>管理员</span></div>
<div class="c" style="left:15.00px;top:427.45px;width:18.75px;height:15.95px;"><span><i>2</i></span></div>
<div class="c" style="left:37.75px;top:427.45px;width:63.25px;height:15.95px;"><span><i>2012<u class="d">-</u>07<u class="d">-</u>26</i></span></div>
<div class="c l" style="left:104.60px;top:427.45px;width:217.20px;height:15.95px;"><span>防盗门锁需要更换一下</span></div>
<div class="c l" style="left:325.00px;top:427.45px;width:63.90px;height:15.95px;"><span><i>13812321111</i></span></div>
<div class="c" style="left:15.00px;top:443.40px;width:18.75px;height:26.70px;"><span><i>3</i></span></div>
<div class="c" style="left:37.75px;top:443.40px;width:63.25px;height:26.70px;"><span><i>2012<u class="d">-</u>09<u class="d">-</u>01</i></span></div>
<div class="c l" style="left:104.60px;top:443.40px;width:217.20px;height:26.70px;"><span>家居搬运及卫生清理</span></div>
<div class="c l" style="left:325.00px;top:443.40px;width:63.90px;height:26.70px;"><span><i>13812321111</i></span></div>
<div class="c w n" style="left:392.50px;top:443.40px;width:48.20px;height:26.70px;"><span>系统管理员</span></div>
<div class="c r" style="left:510.80px;top:443.40px;width:56.00px;height:26.70px;"><span><i>600<u>.</u>00</i></span></div>
<div class="c" style="left:15.00px;top:470.10px;width:18.75px;height:14.40px;"><span><i>4</i></span></div>
<div class="c" style="left:37.75px;top:470.10px;width:63.25px;height:14.40px;"><span><i>2012<u class="d">-</u>08<u class="d">-</u>16</i></span></div>
<div class="c l" style="left:104.60px;top:470.10px;width:217.20px;height:14.40px;"><span>将会客间的电路进行改造，增加<i>3</i>个插座</span></div>
<div class="c l" style="left:325.00px;top:470.10px;width:63.90px;height:14.40px;"><span><i>13812321111</i></span></div>
<div class="c" style="left:392.50px;top:470.10px;width:48.20px;height:14.40px;"><span><i><em>FMS</em></i>管理员</span></div>
<div class="c" style="left:444.70px;top:470.10px;width:62.10px;height:14.40px;"><span><i>2012<u class="d">-</u>12<u class="d">-</u>26</i></span></div>
<div class="c r" style="left:510.80px;top:470.10px;width:56.00px;height:14.40px;"><span><i>750<u>.</u>00</i></span></div>
<div class="st" style="left:22px;top:489.30px">业主的缴费记录</div>
<div class="c b t" style="left:5.00px;top:509.90px;width:78.25px;height:31.80px;"><span>收费种类</span></div>
<div class="c b t" style="left:83.25px;top:509.90px;width:46.75px;height:31.80px;"><span>单位</span></div>
<div class="c b t" style="left:130.00px;top:509.90px;width:46.25px;height:31.80px;"><span>数量</span></div>
<div class="c b t" style="left:176.25px;top:509.90px;width:54.35px;height:31.80px;"><span>收费标准</span></div>
<div class="c b t" style="left:230.60px;top:509.90px;width:44.50px;height:31.80px;"><span>月应收<br><i><u>(</u></i>元<i><u>)</u></i></span></div>
<div class="c b t" style="left:275.10px;top:509.90px;width:53.60px;height:31.80px;"><span>年应收<br><i><u>(</u></i>元<i><u>)</u></i></span></div>
<div class="c b t" style="left:328.70px;top:509.90px;width:54.00px;height:31.80px;"><span>上年尾欠</span></div>
<div class="c b t" style="left:382.70px;top:509.90px;width:46.30px;height:31.80px;"><span>滞纳金</span></div>
<div class="c b t" style="left:429.00px;top:509.90px;width:53.30px;height:31.80px;"><span>尾欠应收</span></div>
<div class="c b t" style="left:482.30px;top:509.90px;width:52.80px;height:31.80px;"><span>本年应收</span></div>
<div class="c b t" style="left:535.10px;top:509.90px;width:62.90px;height:31.80px;"><span>应收合计</span></div>
<div class="c b t" style="left:598.00px;top:509.90px;width:46.00px;height:31.80px;"><span>实收</span></div>
<div class="c b t" style="left:644.00px;top:509.90px;width:46.60px;height:31.80px;"><span>收缴率<i><em>%</em></i></span></div>
<div class="c b t" style="left:690.60px;top:509.90px;width:68.90px;height:31.80px;"><span>计费截止日</span></div>
<div class="c l" style="left:8.60px;top:541.70px;width:71.05px;height:19.70px;"><span>电费<i><u>(</u></i>公摊<i><u>)</u></i></span></div>
<div class="c l" style="left:86.85px;top:541.70px;width:39.55px;height:19.70px;"><span>使用量</span></div>
<div class="c r" style="left:132.00px;top:541.70px;width:42.25px;height:19.70px;"><span><i>0<u>.</u>00</i></span></div>
<div class="c r" style="left:178.25px;top:541.70px;width:50.35px;height:19.70px;"><span><i>0<u>.</u>5480</i></span></div>
<div class="c r" style="left:232.60px;top:541.70px;width:40.50px;height:19.70px;"><span><i>0<u>.</u>00</i></span></div>
<div class="c r" style="left:277.10px;top:541.70px;width:49.60px;height:19.70px;"><span><i>0<u>.</u>00</i></span></div>
<div class="c r" style="left:330.70px;top:541.70px;width:50.00px;height:19.70px;"><span><i>247<u>.</u>20</i></span></div>
<div class="c r" style="left:384.70px;top:541.70px;width:42.30px;height:19.70px;"><span><i>390<u>.</u>49</i></span></div>
<div class="c r" style="left:431.00px;top:541.70px;width:49.30px;height:19.70px;"><span><i>637<u>.</u>69</i></span></div>
<div class="c r" style="left:484.30px;top:541.70px;width:48.80px;height:19.70px;"><span><i>0<u>.</u>00</i></span></div>
<div class="c r" style="left:537.10px;top:541.70px;width:58.90px;height:19.70px;"><span><i>637<u>.</u>69</i></span></div>
<div class="c r" style="left:600.00px;top:541.70px;width:42.00px;height:19.70px;"><span><i>0<u>.</u>00</i></span></div>
<div class="c r" style="left:646.00px;top:541.70px;width:42.60px;height:19.70px;"><span><i>0<u>.</u>00<em>%</em></i></span></div>
<div class="c" style="left:692.60px;top:541.70px;width:64.90px;height:19.70px;"><span><i>2011<u class="d">-</u>01<u class="d">-</u>31</i></span></div>
<div class="c l" style="left:8.60px;top:561.40px;width:71.05px;height:18.40px;"><span>其它费用</span></div>
<div class="c l" style="left:86.85px;top:561.40px;width:39.55px;height:18.40px;"><span>自定义</span></div>
<div class="c r" style="left:132.00px;top:561.40px;width:42.25px;height:18.40px;"><span><i>0<u>.</u>00</i></span></div>
<div class="c r" style="left:178.25px;top:561.40px;width:50.35px;height:18.40px;"><span><i>1<u>.</u>0000</i></span></div>
<div class="c r" style="left:232.60px;top:561.40px;width:40.50px;height:18.40px;"><span><i>0<u>.</u>00</i></span></div>
<div class="c r" style="left:277.10px;top:561.40px;width:49.60px;height:18.40px;"><span><i>0<u>.</u>00</i></span></div>
<div class="c r" style="left:330.70px;top:561.40px;width:50.00px;height:18.40px;"><span><i>3<u>.</u>58</i></span></div>
<div class="c r" style="left:384.70px;top:561.40px;width:42.30px;height:18.40px;"><span><i>0<u>.</u>18</i></span></div>
<div class="c r" style="left:431.00px;top:561.40px;width:49.30px;height:18.40px;"><span><i>3<u>.</u>76</i></span></div>
<div class="c r" style="left:484.30px;top:561.40px;width:48.80px;height:18.40px;"><span><i>0<u>.</u>00</i></span></div>
<div class="c r" style="left:537.10px;top:561.40px;width:58.90px;height:18.40px;"><span><i>3<u>.</u>76</i></span></div>
<div class="c r" style="left:600.00px;top:561.40px;width:42.00px;height:18.40px;"><span><i>0<u>.</u>00</i></span></div>
<div class="c r" style="left:646.00px;top:561.40px;width:42.60px;height:18.40px;"><span><i>0<u>.</u>00<em>%</em></i></span></div>
<div class="c" style="left:692.60px;top:561.40px;width:64.90px;height:18.40px;"><span><i>2013<u class="d">-</u>09<u class="d">-</u>30</i></span></div>
<div class="sb" style="left:5.2px;top:581.5px;font-size:9.7px">完成</div>
<div class="sb" style="left:594.5px;top:581.3px"><b>Internet</b></div>
<div class="sb" style="left:724.5px;top:581.3px"><b>100%</b></div>
<div class="wm1">泛普软件</div>
<div class="wm2">www.fanpusoft.com</div>
</div>
</body>
</html>
